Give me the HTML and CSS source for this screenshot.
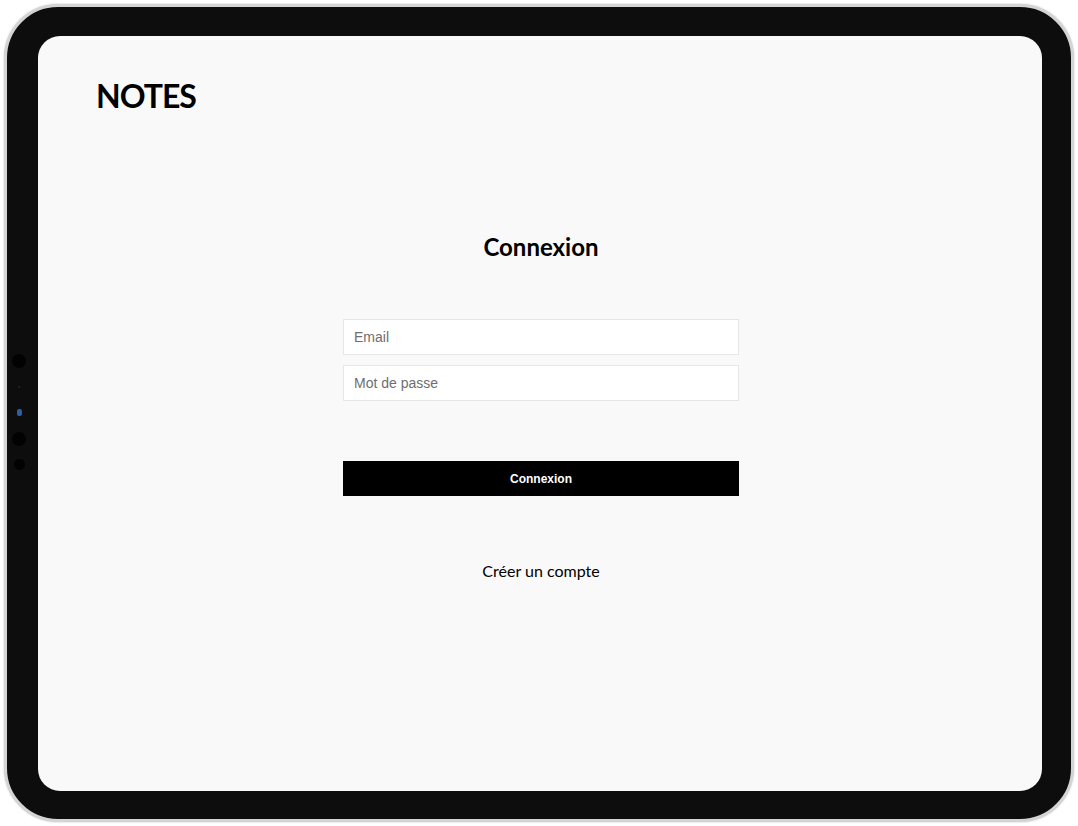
FILE: index.html
```html
<!DOCTYPE html>
<html lang="fr">
<head>
<meta charset="utf-8">
<title>Notes - Connexion</title>
<link rel="stylesheet" href="styles.css">
</head>
<body>
<div class="device">
  <div class="sensors">
    <span class="sensor big"></span>
    <span class="sensor tiny"></span>
    <span class="sensor blue"></span>
    <span class="sensor big second"></span>
    <span class="sensor small"></span>
  </div>
  <div class="screen">
    <header class="top">
      <h1 class="brand">NOTES</h1>
    </header>
    <main class="login">
      <h2 class="title">Connexion</h2>
      <form class="form">
        <input class="field" type="email" placeholder="Email">
        <input class="field" type="password" placeholder="Mot de passe">
        <button class="submit" type="button">Connexion</button>
      </form>
      <a class="signup" href="#">Créer un compte</a>
    </main>
  </div>
</div>
</body>
</html>
```
FILE: styles.css
```css
html, body {
  margin: 0;
  padding: 0;
  background: #ffffff;
}
body {
  width: 1078px;
  height: 826px;
  overflow: hidden;
}
.device {
  position: relative;
  box-sizing: border-box;
  margin: 4px 0 0 4px;
  width: 1070px;
  height: 818px;
  border-radius: 54px;
  border: 3px solid #d4d4d4;
  background: #0d0d0d;
  box-shadow: 0 0 2px rgba(0,0,0,0.25);
  padding: 29px 29px 28px 31px;
}
.sensors {
  position: absolute;
  left: 5px;
  top: 347px;
  width: 14px;
  display: flex;
  flex-direction: column;
  align-items: center;
}
.sensor {
  display: block;
  border-radius: 50%;
  background: #020202;
}
.sensor.big { width: 14px; height: 14px; }
.sensor.tiny { width: 2px; height: 2px; background: #2a2a2a; margin-top: 18px; }
.sensor.blue { width: 5px; height: 7px; border-radius: 2px; background: #2a5fa8; margin-top: 21px; }
.sensor.big.second { margin-top: 16px; }
.sensor.small { width: 11px; height: 11px; margin-top: 13px; }
.screen {
  box-sizing: border-box;
  width: 1004px;
  height: 755px;
  border-radius: 22px;
  background: #f9f9f9;
  padding: 41px 0 0 58px;
  overflow: hidden;
}
.brand {
  margin: 0;
  font-family: Lato, "Liberation Sans", sans-serif;
  font-weight: 700;
  font-size: 32px;
  letter-spacing: -1px;
  line-height: 1.2;
  color: #000;
}
.login {
  display: flex;
  flex-direction: column;
  align-items: center;
  margin-left: -56px;
}
.title {
  margin: 118px 0 0;
  font-family: Lato, "Liberation Sans", sans-serif;
  font-weight: 700;
  font-size: 24px;
  line-height: 1.2;
  color: #000;
}
.form {
  margin-top: 57px;
  width: 396px;
  display: flex;
  flex-direction: column;
  gap: 10px;
}
.field {
  box-sizing: border-box;
  width: 100%;
  height: 36px;
  margin: 0;
  padding: 0 10px;
  border: 1px solid #e6e6e6;
  background: #fff;
  font-family: "Liberation Sans", Arial, sans-serif;
  font-size: 14px;
  color: #222;
  outline: none;
}
.field::placeholder {
  color: #6e6e6e;
}
.submit {
  margin-top: 50px;
  height: 35px;
  width: 100%;
  border: 0;
  background: #000;
  color: #fff;
  font-family: "Liberation Sans", Arial, sans-serif;
  font-weight: 700;
  font-size: 12px;
  cursor: pointer;
}
.signup {
  margin-top: 65px;
  font-family: Lato, "Liberation Sans", sans-serif;
  font-size: 16px;
  line-height: 1.2;
  color: #000;
  text-decoration: none;
}
```
